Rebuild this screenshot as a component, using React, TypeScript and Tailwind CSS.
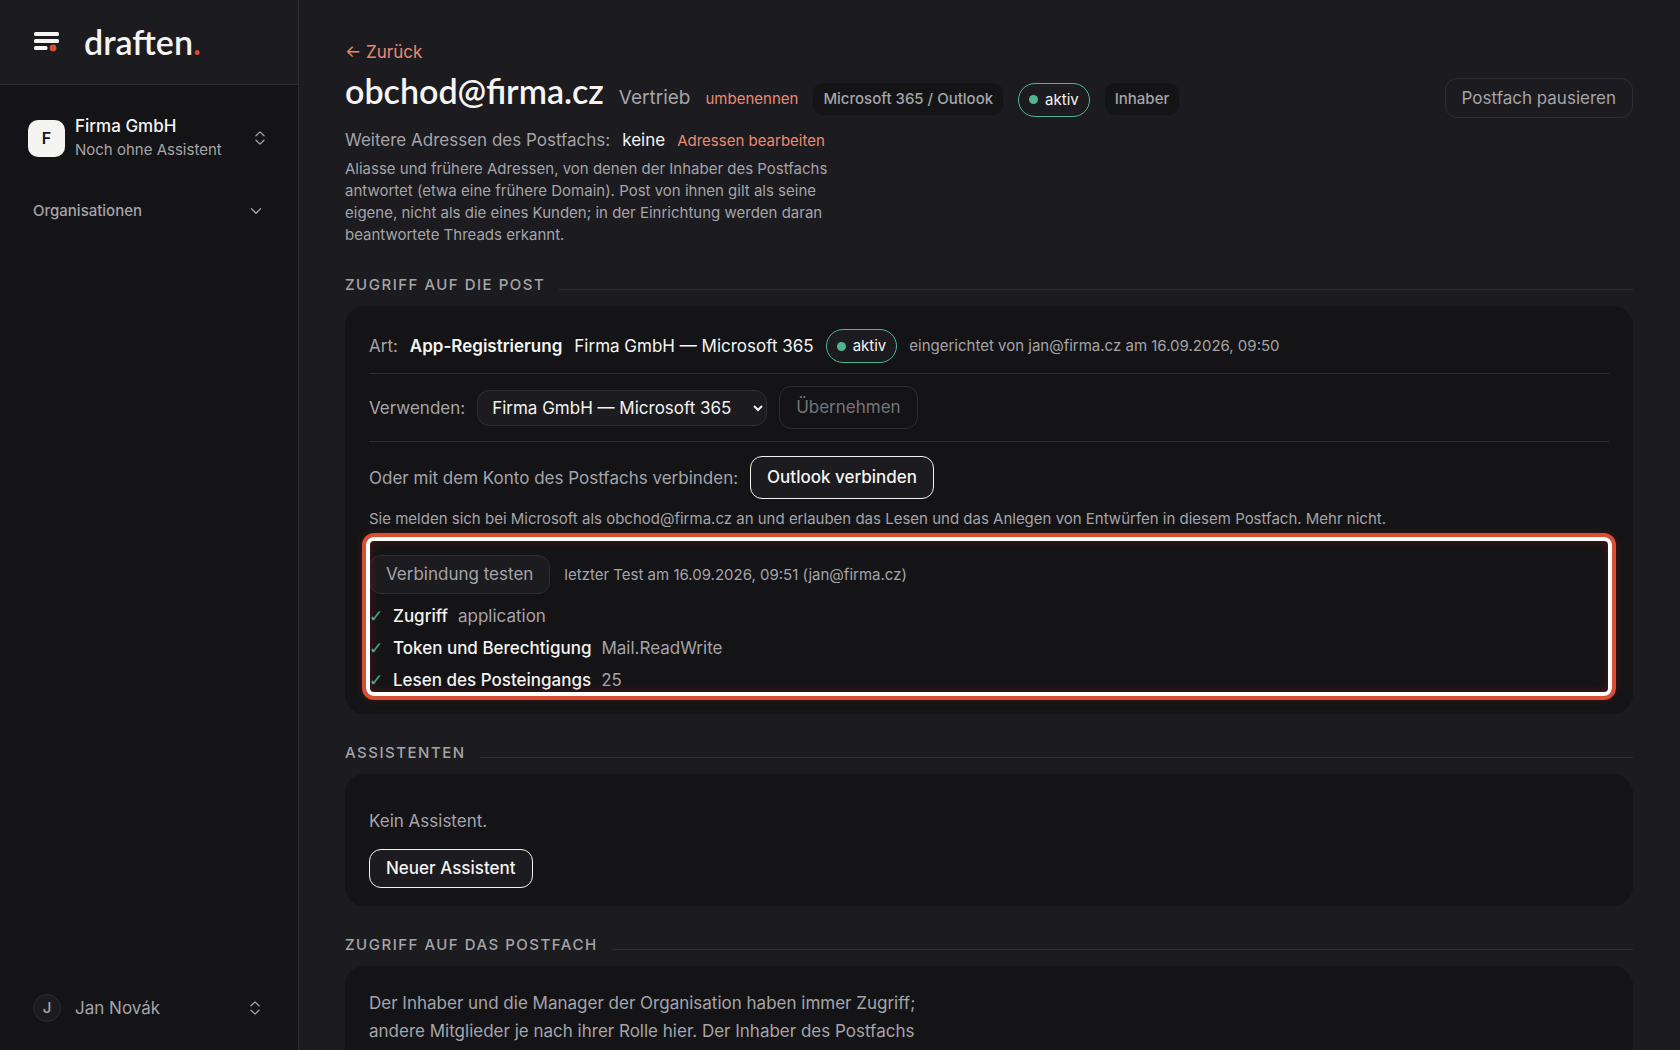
import type { ReactNode } from 'react';
import { ChevronDown } from 'lucide-react';

const checks = [
  { label: 'Zugriff', value: 'application' },
  { label: 'Token und Berechtigung', value: 'Mail.ReadWrite' },
  { label: 'Lesen des Posteingangs', value: '25' },
];

function LogoMark() {
  return (
    <svg width="26" height="20" viewBox="0 0 26 20" aria-hidden="true">
      <rect x="0" y="0" width="25" height="4" rx="1.5" fill="#f4f4f2" />
      <rect x="0" y="7" width="25" height="4" rx="1.5" fill="#f4f4f2" />
      <rect x="0" y="14" width="13.5" height="4" rx="1.5" fill="#f4f4f2" />
      <circle cx="19" cy="16" r="4.4" fill="#1c1b1f" />
      <circle cx="19" cy="16" r="3.4" fill="#d94f33" />
    </svg>
  );
}

function UpDown() {
  return (
    <svg width="10" height="14" viewBox="0 0 10 14" fill="none" stroke="#a5a4a9" strokeWidth="1.3" strokeLinecap="round" strokeLinejoin="round" aria-hidden="true">
      <path d="M1 4.8 5 0.9l4 3.9" />
      <path d="M1 9.2 5 13.1l4-3.9" />
    </svg>
  );
}

function StatusPill() {
  return (
    <span className="inline-flex items-center gap-[7px] rounded-full border border-[#4fb58f] bg-[#1c1b1f] px-[10px] py-1 text-[15px] leading-6 text-[#f4f4f2]">
      <span className="size-[9px] rounded-full bg-[#4fb58f]" />
      aktiv
    </span>
  );
}

function Chip({ children }: { children: ReactNode }) {
  return (
    <span className="rounded-[10px] bg-[#141416] px-[10px] py-1 text-[15px] leading-6 font-medium text-[#a5a4a9]">{children}</span>
  );
}

function Section({ title, children }: { title: string; children: ReactNode }) {
  return (
    <section className="mt-7">
      <div className="flex items-center gap-[14px]">
        <h2 className="text-[15px] leading-[22px] font-medium tracking-widest text-[#a5a4a9] uppercase">{title}</h2>
        <div className="mt-2 h-px flex-1 bg-[#2e2d32]" />
      </div>
      <div className="mt-[10px] rounded-[20px] bg-[#141416] px-6 pt-[23px] pb-[18px]">{children}</div>
    </section>
  );
}

function Sidebar() {
  return (
    <aside className="sticky top-0 flex h-screen w-[299px] shrink-0 flex-col border-r border-[#2e2d32] bg-[#141416]">
      <div className="flex h-[85px] items-center gap-6 border-b border-[#2e2d32] bg-[#1c1b1f] px-[34px]">
        <LogoMark />
        <a href="#" className="font-['Lato',sans-serif] text-[34px] leading-10 font-semibold text-[#f4f4f2]">
          draften<span className="text-[#d94f33]">.</span>
        </a>
      </div>

      <button className="mt-[29px] flex items-center gap-[10px] pr-[33px] pl-7 text-left">
        <span className="flex size-[37px] items-center justify-center rounded-[10px] bg-[#f4f4f2] text-base font-semibold text-[#141416]">F</span>
        <span className="flex-1">
          <span className="block leading-6 font-medium text-[#f4f4f2]">Firma GmbH</span>
          <span className="block text-[15px] leading-6 text-[#a5a4a9]">Noch ohne Assistent</span>
        </span>
        <UpDown />
      </button>

      <button className="mt-[37px] flex items-center justify-between pr-[33px] pl-[33px] text-[15px] leading-6 font-medium text-[#a5a4a9]">
        Organisationen
        <ChevronDown size={18} strokeWidth={1.7} />
      </button>

      <button className="mt-auto mb-7 flex items-center gap-[14px] pr-[38px] pl-[33px] text-left text-[#a5a4a9]">
        <span className="flex size-7 items-center justify-center rounded-full border border-[#2e2d32] bg-[#1c1b1f] text-[15px] font-medium">J</span>
        <span className="flex-1 leading-6">Jan Novák</span>
        <UpDown />
      </button>
    </aside>
  );
}

export default function App() {
  return (
    <div className="flex min-h-screen bg-[#1c1b1f] font-['Inter',sans-serif] text-[17px] leading-7 text-[#a5a4a9]">
      <Sidebar />

      <main className="min-w-0 flex-1 pt-[38px] pr-[47px] pb-12 pl-[46px]">
        <a href="#" className="text-[#ec8a70]">← Zurück</a>

        <header className="mt-1 flex items-start justify-between gap-6">
          <div className="flex flex-wrap items-baseline gap-[15px]">
            <h1 className="font-['Lato',sans-serif] text-[34px] leading-[42px] font-semibold text-[#f4f4f2]">obchod@firma.cz</h1>
            <span className="text-[19px]">Vertrieb</span>
            <button className="text-[15px] text-[#ec8a70]">umbenennen</button>
            <Chip>Microsoft 365 / Outlook</Chip>
            <StatusPill />
            <Chip>Inhaber</Chip>
          </div>
          <button className="mt-2 shrink-0 rounded-xl border border-[#2e2d32] px-4 py-[5px]">Postfach pausieren</button>
        </header>

        <div className="mt-2 flex flex-wrap items-baseline gap-3">
          <span>Weitere Adressen des Postfachs:</span>
          <span className="text-[#f4f4f2]">keine</span>
          <button className="text-[15px] text-[#ec8a70]">Adressen bearbeiten</button>
        </div>
        <p className="mt-[3px] max-w-[500px] text-[15px] leading-[22px]">
          Aliasse und frühere Adressen, von denen der Inhaber des Postfachs antwortet (etwa eine frühere Domain). Post von ihnen gilt als seine eigene, nicht als die eines Kunden; in der Einrichtung werden daran beantwortete Threads erkannt.
        </p>

        <Section title="Zugriff auf die Post">
          <div className="flex flex-wrap items-center gap-3 border-b border-[#2e2d32] pb-[10px]">
            <span>Art:</span>
            <strong className="font-semibold text-[#f4f4f2]">App-Registrierung</strong>
            <span className="text-[#f4f4f2]">Firma GmbH — Microsoft 365</span>
            <StatusPill />
            <span className="text-[15px]">eingerichtet von jan@firma.cz am 16.09.2026, 09:50</span>
          </div>

          <div className="flex flex-wrap items-center gap-3 border-b border-[#2e2d32] py-3">
            <label htmlFor="registration">Verwenden:</label>
            <select id="registration" className="h-9 w-[290px] rounded-xl border border-[#2e2d32] bg-[#1c1b1f] pl-[10px] text-[#f4f4f2]">
              <option>Firma GmbH — Microsoft 365</option>
            </select>
            <button disabled className="rounded-xl border border-[#2e2d32] px-4 py-[7px] leading-[27px] text-[#75747a]">Übernehmen</button>
          </div>

          <div className="flex flex-wrap items-center gap-3 pt-[14px]">
            <span>Oder mit dem Konto des Postfachs verbinden:</span>
            <button className="rounded-xl border border-[#f4f4f2] bg-[#1c1b1f] px-4 py-[7px] leading-[27px] font-medium text-[#f4f4f2]">Outlook verbinden</button>
          </div>
          <p className="mt-2 text-[15px] leading-6">
            Sie melden sich bei Microsoft als obchod@firma.cz an und erlauben das Lesen und das Anlegen von Entwürfen in diesem Postfach. Mehr nicht.
          </p>

          <div className="relative mt-2 mb-0.5 pt-4">
            <div className="flex flex-wrap items-center gap-[14px]">
              <button className="rounded-xl border border-[#2e2d32] bg-[#1c1b1f] px-4 py-[5px] leading-[27px]">Verbindung testen</button>
              <span className="text-[15px]">letzter Test am 16.09.2026, 09:51 (jan@firma.cz)</span>
            </div>
            <ul className="mt-2 space-y-1">
              {checks.map((check) => (
                <li key={check.label} className="flex items-baseline gap-[10px]">
                  <span className="w-[14px] font-['DejaVu_Sans',sans-serif] text-[#4fb58f]">✓</span>
                  <span className="font-medium text-[#f4f4f2]">{check.label}</span>
                  <span>{check.value}</span>
                </li>
              ))}
            </ul>
            <div className="pointer-events-none absolute -inset-x-[7px] -inset-y-[6px] rounded-xl border-4 border-[#d94f33] shadow-[0_0_8px_#b81e1e40]">
              <div className="h-full rounded-lg border-4 border-white shadow-[inset_0_0_10px_#b81e1e60]" />
            </div>
          </div>
        </Section>

        <Section title="Assistenten">
          <p className="mt-[10px]">Kein Assistent.</p>
          <button className="mt-[14px] rounded-xl border border-[#f4f4f2] bg-[#1c1b1f] px-4 py-[5px] leading-[27px] font-medium text-[#f4f4f2]">Neuer Assistent</button>
        </Section>

        <Section title="Zugriff auf das Postfach">
          <p className="max-w-[580px]">
            Der Inhaber und die Manager der Organisation haben immer Zugriff; andere Mitglieder je nach ihrer Rolle hier. Der Inhaber des Postfachs kann Mitglieder einladen und den Zugriff wieder entziehen.
          </p>
        </Section>
      </main>
    </div>
  );
}
